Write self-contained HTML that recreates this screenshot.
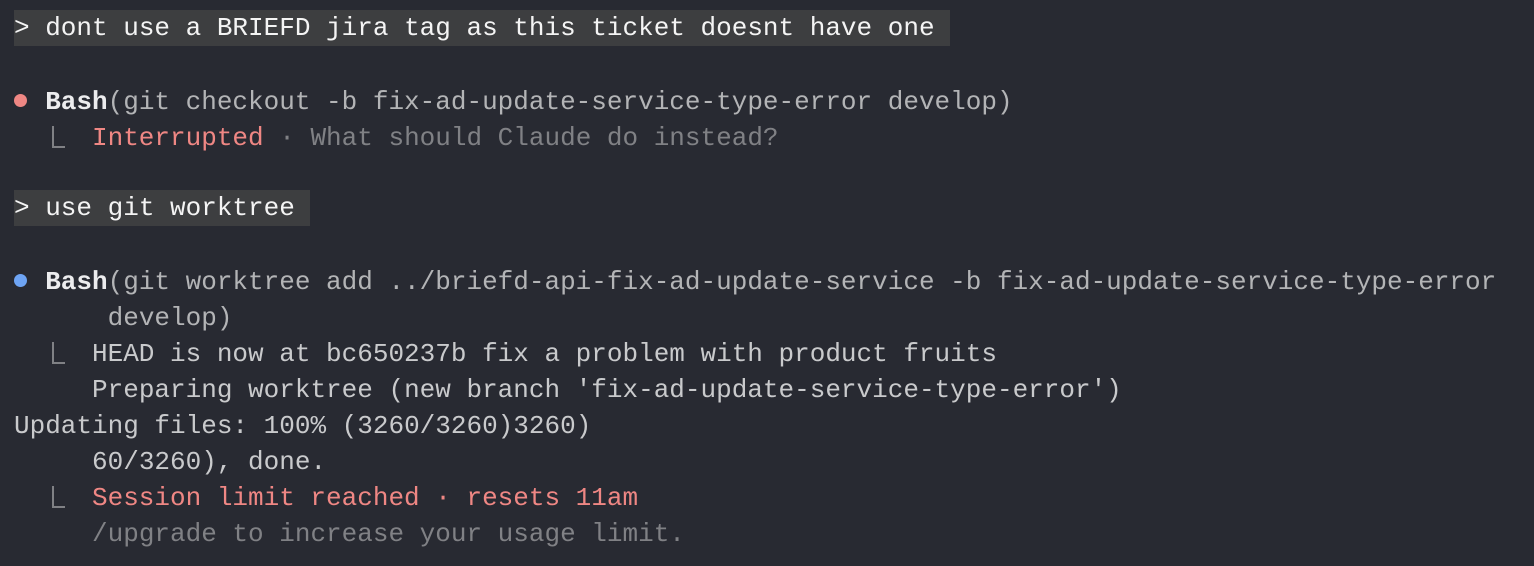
<!DOCTYPE html>
<html><head><style>
html,body{margin:0;padding:0;background:#282a32;width:1534px;height:566px;overflow:hidden}
.r{position:absolute;left:14px;height:36px;line-height:36px;font-family:"Liberation Mono","DejaVu Sans Mono",monospace;font-size:26px;white-space:pre;color:#c9cacc}
.hl{background:#3d3e40;color:#f4f4f4}
.w{color:#ececee;font-weight:bold}
.g{color:#b3b4b6}
.d{color:#808185}
.red{color:#ef8784}
.bw{display:inline-block;width:31.2px;height:36px;vertical-align:top;position:relative}
.bw i{position:absolute;left:0px;top:10px;width:13px;height:13px;border-radius:50%}
.el{display:inline-block;width:78px;height:36px;vertical-align:top;position:relative}
.el i{position:absolute;left:38px;top:6px;width:13px;height:22px;border-left:2px solid #808185;border-bottom:2px solid #808185;box-sizing:border-box}
</style></head><body>
<div class="r hl" style="top:10px">&gt; dont use a BRIEFD jira tag as this ticket doesnt have one </div>
<div class="r" style="top:84px"><span class="bw"><i style="background:#ef8784"></i></span><span class="w">Bash</span><span class="g">(git checkout -b fix-ad-update-service-type-error develop)</span></div>
<div class="r" style="top:120px"><span class="el"><i></i></span><span class="red">Interrupted</span><span class="d"> · What should Claude do instead?</span></div>
<div class="r hl" style="top:190px">&gt; use git worktree </div>
<div class="r" style="top:264px"><span class="bw"><i style="background:#6ea4f4"></i></span><span class="w">Bash</span><span class="g">(git worktree add ../briefd-api-fix-ad-update-service -b fix-ad-update-service-type-error</span></div>
<div class="r g" style="top:300px">      develop)</div>
<div class="r" style="top:336px"><span class="el"><i></i></span>HEAD is now at bc650237b fix a problem with product fruits</div>
<div class="r" style="top:372px">     Preparing worktree (new branch 'fix-ad-update-service-type-error')</div>
<div class="r" style="top:408px">Updating files: 100% (3260/3260)3260)</div>
<div class="r" style="top:444px">     60/3260), done.</div>
<div class="r" style="top:480px"><span class="el"><i></i></span><span class="red">Session limit reached · resets 11am</span></div>
<div class="r d" style="top:516px">     /upgrade to increase your usage limit.</div>
</body></html>
